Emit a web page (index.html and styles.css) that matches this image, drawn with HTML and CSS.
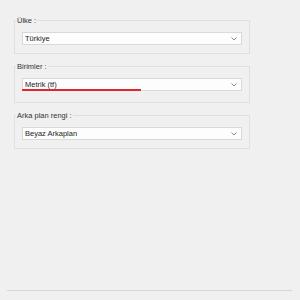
FILE: index.html
```html
<!DOCTYPE html>
<html lang="tr">
<head>
<meta charset="UTF-8" />
<meta name="viewport" content="width=device-width, initial-scale=1" />
<title>Ayarlar</title>
<link rel="stylesheet" href="styles.css">
</head>
<body>

<div class="panel">
  <fieldset class="group">
    <legend>Ülke :</legend>
    <div class="select">
      <span>Türkiye</span>
      <svg class="chevron" width="6" height="4" viewBox="0 0 6 4"><path d="M0.5 0.5 L3 3 L5.5 0.5" fill="none" stroke="#8a8a8a" stroke-width="1"/></svg>
    </div>
  </fieldset>

  <fieldset class="group has-error">
    <legend>Birimler :</legend>
    <div class="select">
      <span>Metrik (tf)</span>
      <svg class="chevron" width="6" height="4" viewBox="0 0 6 4"><path d="M0.5 0.5 L3 3 L5.5 0.5" fill="none" stroke="#8a8a8a" stroke-width="1"/></svg>
      <i class="mark"></i>
    </div>
  </fieldset>

  <fieldset class="group">
    <legend>Arka plan rengi :</legend>
    <div class="select">
      <span>Beyaz Arkaplan</span>
      <svg class="chevron" width="6" height="4" viewBox="0 0 6 4"><path d="M0.5 0.5 L3 3 L5.5 0.5" fill="none" stroke="#8a8a8a" stroke-width="1"/></svg>
    </div>
  </fieldset>
</div>

<div class="footer">
  <div class="actions">
    <button class="btn btn-primary">Tamam</button>
    <button class="btn">İptal</button>
  </div>
</div>

</body>
</html>
```

FILE: styles.css
```css
body {
  margin: 0;
  background: #f0f0f0;
  font-family: "Liberation Sans", Arial, sans-serif;
  font-size: 7.5px;
  color: #222;
}
.panel { padding: 15px 0 0 14px; }

.group {
  width: 236px;
  box-sizing: border-box;
  margin: 0 0 7px;
  padding: 6px 7px 8px;
  border: 1px solid #e0e0e0;
}
.group.has-error { padding-bottom: 11px; }
.group legend {
  line-height: 11px;
  padding: 0 1px;
  margin-left: -6px;
  color: #333;
}

.select {
  position: relative;
  display: flex;
  align-items: center;
  justify-content: space-between;
  height: 13px;
  box-sizing: border-box;
  padding: 0 4px 0 2px;
  background: #fdfdfd;
  border: 1px solid #d9d9d9;
}
.chevron { display: block; }
.mark {
  position: absolute;
  left: -1px;
  bottom: -1px;
  width: 119px;
  height: 2px;
  background: #e3262b;
}

.footer {
  margin-top: 141px;
  padding: 0 8px 0 7px;
}
.actions {
  display: flex;
  justify-content: flex-end;
  gap: 9px;
  padding-top: 9px;
  border-top: 1px solid #d6d6d6;
}
.btn {
  width: 50px;
  height: 20px;
  font: inherit;
  background: #e1e1e1;
  border: 1px solid #cdcdcd;
}
.btn-primary {
  width: 51px;
  background: #e5f1fb;
  border-color: #7eb4ea;
}
```
